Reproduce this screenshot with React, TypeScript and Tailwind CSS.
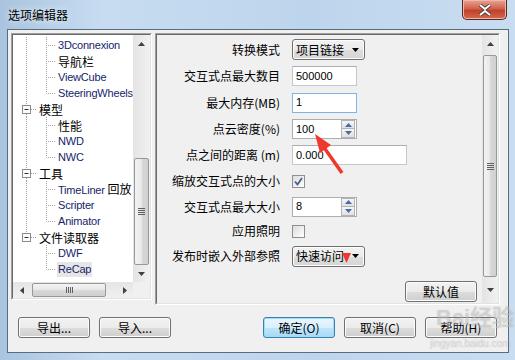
import React from 'react';

const DOT = { stroke: '#a0a0a0', strokeWidth: 1, strokeDasharray: '1 1' } as const;

type Row = { t: string; lvl: 1 | 2; en?: boolean; last?: boolean; lastTop?: boolean; sel?: boolean; trunk: boolean };

const rows: Row[] = [
  { t: '3Dconnexion', lvl: 2, en: true, trunk: true },
  { t: '导航栏', lvl: 2, trunk: true },
  { t: 'ViewCube', lvl: 2, en: true, trunk: true },
  { t: 'SteeringWheels', lvl: 2, en: true, last: true, trunk: true },
  { t: '模型', lvl: 1, trunk: true },
  { t: '性能', lvl: 2, trunk: true },
  { t: 'NWD', lvl: 2, en: true, trunk: true },
  { t: 'NWC', lvl: 2, en: true, last: true, trunk: true },
  { t: '工具', lvl: 1, trunk: true },
  { t: 'TimeLiner', lvl: 2, en: true, trunk: true },
  { t: 'Scripter', lvl: 2, en: true, trunk: true },
  { t: 'Animator', lvl: 2, en: true, last: true, trunk: true },
  { t: '文件读取器', lvl: 1, lastTop: true, trunk: true },
  { t: 'DWF', lvl: 2, en: true, trunk: false },
  { t: 'ReCap', lvl: 2, en: true, last: true, sel: true, trunk: false },
];

function Lines({ r }: { r: Row }) {
  if (r.lvl === 1) {
    return (
      <svg width="24" height="16" className="shrink-0">
        <line x1="13.5" y1="0" x2="13.5" y2="4" {...DOT} />
        {!r.lastTop && <line x1="13.5" y1="13" x2="13.5" y2="16" {...DOT} />}
        <rect x="9.5" y="4.5" width="8" height="8" fill="#fbfbfb" stroke="#8a8a8a" />
        <line x1="11.5" y1="8.5" x2="15.5" y2="8.5" stroke="#1b2f5e" />
        <line x1="18" y1="8.5" x2="23" y2="8.5" {...DOT} />
      </svg>
    );
  }
  return (
    <svg width="43" height="16" className="shrink-0">
      {r.trunk && <line x1="13.5" y1="0" x2="13.5" y2="16" {...DOT} />}
      <line x1="33.5" y1="0" x2="33.5" y2={r.last ? 8.5 : 16} {...DOT} />
      <line x1="35" y1="8.5" x2="42" y2="8.5" {...DOT} />
    </svg>
  );
}

function UpArrow() {
  return (
    <svg width="7" height="4">
      <path d="M0 4L3.5 0L7 4Z" fill="#404040" />
    </svg>
  );
}
function DownArrow() {
  return (
    <svg width="7" height="4">
      <path d="M0 0H7L3.5 4Z" fill="#404040" />
    </svg>
  );
}

function VGrip() {
  return (
    <div className="flex flex-col gap-[1px] items-center">
      <div className="w-[7px] h-[1px] bg-[#606060]" />
      <div className="w-[7px] h-[1px] bg-[#606060]" />
      <div className="w-[7px] h-[1px] bg-[#606060]" />
      <div className="w-[7px] h-[1px] bg-[#606060]" />
    </div>
  );
}

function Btn({ children, def }: { children: React.ReactNode; def?: boolean }) {
  return (
    <div
      className={
        'h-[21px] w-[72px] rounded-[3px] border flex items-center justify-center text-[12px] text-black ' +
        (def
          ? 'border-[#3c7fb1] shadow-[inset_0_0_0_1px_#9fdcf6] bg-[linear-gradient(#eaf6fd_0%,#d9f0fc_50%,#bee6fd_51%,#a7d9f5_100%)]'
          : 'border-[#707070] shadow-[inset_0_0_0_1px_#fcfcfc] bg-[linear-gradient(#f2f2f2_0%,#ebebeb_50%,#dddddd_51%,#cfcfcf_100%)]')
      }
    >
      {children}
    </div>
  );
}

function TextBox({ w, v, focus }: { w: string; v: string; focus?: boolean }) {
  return (
    <div
      className={
        'h-[20px] bg-white border flex items-center pl-[3px] text-[11px] font-[Liberation_Sans,sans-serif] text-black ' +
        w +
        (focus ? ' border-[#7eb4ea]' : ' border-[#c4c7cc] border-t-[#abadb3]')
      }
    >
      {v}
    </div>
  );
}

function Spin({ v }: { v: string }) {
  return (
    <div className="h-[20px] w-[65px] bg-white border border-[#abadb3] flex items-center justify-between pl-[3px] pr-[1px]">
      <span className="text-[11px] font-[Liberation_Sans,sans-serif] text-black">{v}</span>
      <div className="flex flex-col gap-[0px]">
        <div className="w-[14px] h-[9px] border border-[#b4b4b4] bg-[linear-gradient(#f6f6f6,#e0e0e0)] flex items-center justify-center">
          <svg width="7" height="4">
            <path d="M0 4L3.5 0L7 4Z" fill="#4d6a9e" />
          </svg>
        </div>
        <div className="w-[14px] h-[9px] border border-[#b4b4b4] border-t-0 bg-[linear-gradient(#f6f6f6,#e0e0e0)] flex items-center justify-center">
          <svg width="7" height="4">
            <path d="M0 0H7L3.5 4Z" fill="#4d6a9e" />
          </svg>
        </div>
      </div>
    </div>
  );
}

function Combo({ v }: { v: string }) {
  return (
    <div className="h-[21px] w-[73px] rounded-[3px] border border-[#707070] shadow-[inset_0_0_0_1px_#fcfcfc] bg-[linear-gradient(#f2f2f2_0%,#ebebeb_50%,#dddddd_51%,#d6d6d6_100%)] flex items-center justify-between pl-[3px] pr-[5px]">
      <span className="text-[12px] text-black leading-none">{v}</span>
      <svg width="7" height="4">
        <path d="M0 0H7L3.5 4Z" fill="#000" />
      </svg>
    </div>
  );
}

function Check({ on }: { on?: boolean }) {
  return (
    <div className="w-[13px] h-[13px] border border-[#8e8f8f] bg-[linear-gradient(135deg,#dcdcdc,#ffffff)] flex items-center justify-center">
      {on && (
        <svg width="11" height="11">
          <path d="M2 5.5L4.5 8.5L9 2" fill="none" stroke="#4a5d8f" strokeWidth="1.8" />
        </svg>
      )}
    </div>
  );
}

function FormRow({ h, label, children }: { h: string; label: string; children: React.ReactNode }) {
  return (
    <div className={'flex items-center ' + h}>
      <div className="w-[123px] text-right text-[12px] leading-none text-black whitespace-nowrap">{label}</div>
      <div className="ml-[12px] flex items-center">{children}</div>
    </div>
  );
}

export default function App() {
  return (
    <div className="relative w-[515px] h-[360px] overflow-hidden bg-[linear-gradient(90deg,#a9c4df,#c7dcf0_20%,#bdd5ec_60%,#c9ddf1)] font-['Noto_Sans_CJK_SC','Liberation_Sans',sans-serif]">
      {/* title bar */}
      <div className="h-[29px] flex items-start justify-between pl-[8px] pr-[8px]">
        <div className="mt-[7px] text-[12px] leading-[16px] text-black [text-shadow:0_0_6px_#ffffff]">选项编辑器</div>
        <div className="w-[45px] h-[20px] rounded-b-[5px] border border-t-0 border-[#5b2620] bg-[linear-gradient(#e8a493_0%,#d0624b_45%,#c2412b_55%,#cf6a4e_100%)] flex items-center justify-center shadow-[inset_0_0_0_1px_#f0b8a8]">
          <svg width="14" height="12" viewBox="0 0 14 12">
            <path d="M2 1L7 5L12 1M2 11L7 7L12 11" fill="none" stroke="#4a3a38" strokeWidth="3.6" />
            <path d="M2 1L7 5L12 1M2 11L7 7L12 11" fill="none" stroke="#ffffff" strokeWidth="2" />
          </svg>
        </div>
      </div>

      <div className="flex h-[324px]">
        <div className="w-[7px]" />
        {/* client */}
        <div className="w-[502px] h-[324px] border border-[#5c6c7c] bg-[#f0f0f0] flex flex-col pl-[3px] pr-[6px] pt-[3px]">
          <div className="flex items-start gap-[3px]">
            {/* tree panel */}
            <div className="w-[141px] h-[267px] border border-[#a0a0a0] border-r-white border-b-white">
              <div className="w-full h-full border border-[#696969] border-r-[#e3e3e3] border-b-[#e3e3e3] bg-white flex flex-col">
                <div className="flex h-[247px]">
                  <div className="flex-1 pt-[2px] overflow-hidden">
                    {rows.map((r, i) => (
                      <div key={i} className="flex items-center h-[16px] whitespace-nowrap">
                        <Lines r={r} />
                        <span
                          className={
                            'ml-[1px] leading-[15px] px-[1px] ' +
                            (r.sel ? 'bg-[#e6e6e6] ' : '') +
                            (r.en
                              ? "text-[11px] tracking-[-0.2px] text-[#16256a] font-['Liberation_Sans',sans-serif]"
                              : 'text-[12px] text-black')
                          }
                        >
                          {r.t}
                          {r.t === 'TimeLiner' && (
                            <span className="text-[12px] tracking-normal text-black font-['Noto_Sans_CJK_SC',sans-serif]"> 回放</span>
                          )}
                        </span>
                      </div>
                    ))}
                  </div>
                  {/* tree vscroll */}
                  <div className="w-[17px] h-full bg-[linear-gradient(90deg,#e4e4e4,#f1f1f1)] flex flex-col">
                    <div className="h-[17px] flex items-center justify-center">
                      <UpArrow />
                    </div>
                    <div className="mt-[106px] mx-[1px] h-[107px] rounded-[2px] border border-[#989898] bg-[linear-gradient(90deg,#f3f3f3,#e8e8e8_50%,#d8d8d8_51%,#d0d0d0)] flex items-center justify-center">
                      <VGrip />
                    </div>
                    <div className="h-[17px] flex items-center justify-center">
                      <DownArrow />
                    </div>
                  </div>
                </div>
                {/* tree hscroll */}
                <div className="flex h-[16px]">
                  <div className="flex-1 bg-[linear-gradient(#e4e4e4,#f1f1f1)] flex items-center">
                    <div className="w-[17px] flex items-center justify-center">
                      <svg width="4" height="7">
                        <path d="M4 0V7L0 3.5Z" fill="#404040" />
                      </svg>
                    </div>
                    <div className="ml-[2px] w-[74px] h-[14px] rounded-[2px] border border-[#989898] bg-[linear-gradient(#f3f3f3,#e8e8e8_50%,#d8d8d8_51%,#d0d0d0)] flex items-center justify-center gap-[1px]">
                      <div className="w-[1px] h-[6px] bg-[#606060]" />
                      <div className="w-[1px] h-[6px] bg-[#606060]" />
                      <div className="w-[1px] h-[6px] bg-[#606060]" />
                      <div className="w-[1px] h-[6px] bg-[#606060]" />
                    </div>
                    <div className="flex-1" />
                    <div className="w-[17px] flex items-center justify-center">
                      <svg width="4" height="7">
                        <path d="M0 0V7L4 3.5Z" fill="#404040" />
                      </svg>
                    </div>
                  </div>
                  <div className="w-[17px] bg-[#f0f0f0]" />
                </div>
              </div>
            </div>

            {/* right panel */}
            <div className="w-[345px] h-[272px] border border-[#a0a0a0] border-r-white border-b-white">
              <div className="w-full h-full border border-[#696969] border-r-[#e3e3e3] border-b-[#e3e3e3] bg-[#f0f0f0] flex">
                <div className="flex-1 flex flex-col pt-[1px]">
                  <FormRow h="h-[27px]" label="转换模式">
                    <Combo v="项目链接" />
                  </FormRow>
                  <FormRow h="h-[26px]" label="交互式点最大数目">
                    <TextBox w="w-[65px]" v="500000" />
                  </FormRow>
                  <FormRow h="h-[27px]" label="最大内存(MB)">
                    <TextBox w="w-[65px]" v="1" focus />
                  </FormRow>
                  <FormRow h="h-[26px]" label="点云密度(%)">
                    <Spin v="100" />
                  </FormRow>
                  <FormRow h="h-[26px]" label="点之间的距离 (m)">
                    <TextBox w="w-[115px]" v="0.000" />
                  </FormRow>
                  <FormRow h="h-[26px]" label="缩放交互式点的大小">
                    <Check on />
                  </FormRow>
                  <FormRow h="h-[25px]" label="交互式点最大大小">
                    <Spin v="8" />
                  </FormRow>
                  <FormRow h="h-[24px]" label="应用照明">
                    <Check />
                  </FormRow>
                  <FormRow h="h-[26px]" label="发布时嵌入外部参照">
                    <Combo v="快速访问" />
                  </FormRow>
                  <div className="mt-[12px] flex justify-end pr-[5px]">
                    <Btn>默认值</Btn>
                  </div>
                </div>
                {/* right vscroll */}
                <div className="w-[16px] h-full bg-[linear-gradient(90deg,#e4e4e4,#f1f1f1)] flex flex-col">
                  <div className="h-[17px] flex items-center justify-center">
                    <UpArrow />
                  </div>
                  <div className="mt-[3px] mx-[1px] h-[222px] rounded-[2px] border border-[#989898] bg-[linear-gradient(90deg,#f3f3f3,#e8e8e8_50%,#d8d8d8_51%,#d0d0d0)] flex items-center justify-center">
                    <VGrip />
                  </div>
                  <div className="flex-1 flex items-center justify-center">
                    <DownArrow />
                  </div>
                </div>
              </div>
            </div>
          </div>

          {/* buttons */}
          <div className="mt-[12px] flex items-center pl-[7px] pr-[5px]">
            <div className="flex gap-[9px]">
              <Btn>导出...</Btn>
              <Btn>导入...</Btn>
            </div>
            <div className="flex-1" />
            <div className="flex gap-[9px]">
              <Btn def>确定(O)</Btn>
              <Btn>取消(C)</Btn>
              <Btn>帮助(H)</Btn>
            </div>
          </div>
        </div>
        <div className="w-[6px]" />
      </div>

      {/* watermark */}
      <div className="absolute left-[436px] top-[304px] text-[22px] font-bold leading-none text-white/40 [text-shadow:0_0_1px_rgba(0,0,0,0.25)] font-['Liberation_Sans',sans-serif] pointer-events-none">
        Bai<span className="font-['Noto_Sans_CJK_SC',sans-serif]">经验</span>
      </div>
      <div className="absolute left-[430px] top-[339px] text-[10px] leading-none text-white/40 [text-shadow:0_0_1px_rgba(0,0,0,0.25)] font-['Liberation_Sans',sans-serif] pointer-events-none">
        jingyan.baidu.com
      </div>

      {/* red annotations */}
      <svg className="absolute left-0 top-0 pointer-events-none" width="515" height="360">
        <line x1="342" y1="173" x2="323" y2="146" stroke="#f0372c" strokeWidth="3.5" />
        <polygon points="315,134 331,145 320,153" fill="#f0372c" />
        <polygon points="342,253 351,253 346.5,263" fill="#f0372c" />
      </svg>
    </div>
  );
}
